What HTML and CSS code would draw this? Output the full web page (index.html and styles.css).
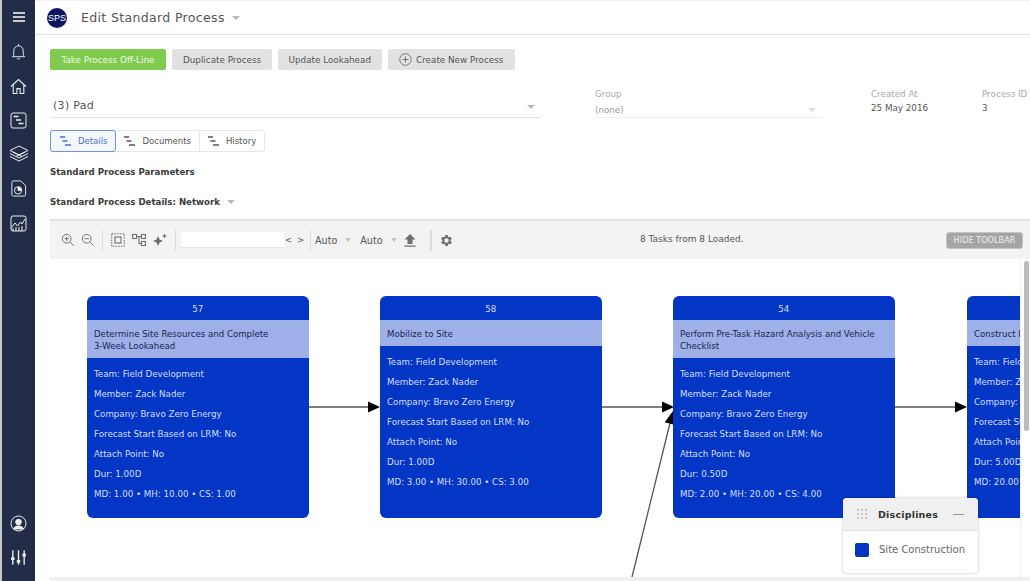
FILE: index.html
```html
<!DOCTYPE html>
<html lang="en">
<head>
<meta charset="utf-8">
<title>Edit Standard Process</title>
<link rel="stylesheet" href="styles.css">
</head>
<body>
<div class="app">
  <aside class="rail">
    <svg class="ri menu" viewBox="0 0 14 12"><path d="M1 2h12M1 6h12M1 10h12" stroke-width="1.6"/></svg>
    <div class="rail-top">
      <svg class="ri" viewBox="0 0 16 18"><path d="M3 13V8a5 5 0 0 1 10 0v5l1.500 1.500h-13zM8 1.200V3M6.500 16a1.600 1.600 0 0 0 3 0"/></svg>
      <svg class="ri" viewBox="0 0 16 16"><path d="M1 8l7-6.500L15 8M3 6.500V14.500h3.500V10h3v4.500H13V6.500"/></svg>
      <svg class="ri" viewBox="0 0 17 17"><rect x="1" y="1" width="15" height="15" rx="2"/><path d="M3.500 4.500h5M6 8h5M8.500 11.500h5" stroke-width="1.400"/></svg>
      <svg class="ri big" viewBox="0 0 20 20"><path d="M10 2l9 4.500-9 4.500-9-4.500zM1 9.500l9 4.500 9-4.500M1 12.500l9 4.500 9-4.500M4 8l9 4.500M16 8l-9 4.500"/></svg>
      <svg class="ri" viewBox="0 0 17 18"><path d="M3 1h8l5 5v9.500a1.500 1.500 0 0 1-1.500 1.500h-11A1.500 1.500 0 0 1 1.500 15.500V2.500A1.500 1.500 0 0 1 3 1z"/><circle cx="8" cy="11" r="3.800"/><path d="M8 11V7.200a3.800 3.800 0 0 1 3.800 3.800z" fill="#fff"/></svg>
      <svg class="ri" viewBox="0 0 17 17"><rect x="1" y="1" width="15" height="15" rx="2"/><path d="M1.500 12.500L5 8l2.500 3 3-4 1.500 2 3-5M3 16v-3M6 16v-4M9 16v-4M12 16v-5"/></svg>
    </div>
    <div class="rail-bottom">
      <svg class="ri" viewBox="0 0 17 17"><circle cx="8.500" cy="8.500" r="7.500"/><circle cx="8.500" cy="7" r="2.800" fill="#fff"/><path d="M3.500 14c1-2.500 2.500-3 5-3s4 .5 5 3z" fill="#fff"/></svg>
      <svg class="ri" viewBox="0 0 15 15"><path d="M2.500 1v13M7.500 1v13M12.500 1v13" stroke-width="1.200"/><path d="M1 8.500h3M6 11h3M11 5.500h3" stroke-width="2.400"/></svg>
    </div>
  </aside>
  <main class="main">
    <header class="top">
      <div class="logo">SPS</div>
      <h1 class="title">Edit Standard Process</h1>
      <span class="caret caret-title"></span>
    </header>
    <div class="content">
      <div class="actions">
        <button class="btn btn-green">Take Process Off-Line</button>
        <button class="btn">Duplicate Process</button>
        <button class="btn">Update Lookahead</button>
        <button class="btn btn-new">
          <svg class="plus" viewBox="0 0 14 14"><circle cx="7" cy="7" r="6.200"/><path d="M7 3.700v6.600M3.700 7h6.600"/></svg>
          Create New Process
        </button>
      </div>
      <div class="form">
        <div class="field-name"><span>(3) Pad</span><span class="caret"></span></div>
        <div class="field-group">
          <div class="lab">Group</div>
          <div class="sel"><span>(none)</span><span class="caret caret-pale"></span></div>
        </div>
        <div class="field-created">
          <div class="lab">Created At</div>
          <div class="val">25 May 2016</div>
        </div>
        <div class="field-id">
          <div class="lab">Process ID</div>
          <div class="val">3</div>
        </div>
      </div>
      <div class="tabs">
        <div class="tab tab-on"><svg class="tabi" viewBox="0 0 11 10"><path d="M0 1h5M2.500 5h5M5 9h6"/></svg>Details</div>
        <div class="tab"><svg class="tabi" viewBox="0 0 11 10"><path d="M0 1h5M2.500 5h5M5 9h6"/></svg>Documents</div>
        <div class="tab"><svg class="tabi" viewBox="0 0 11 10"><path d="M0 1h5M2.500 5h5M5 9h6"/></svg>History</div>
      </div>
      <div class="sec sec-params">Standard Process Parameters</div>
      <div class="sec sec-net">Standard Process Details: Network<span class="caret"></span></div>
    </div>
    <div class="toolbar">
      <svg class="ti" viewBox="0 0 16 16"><circle cx="6.500" cy="6.500" r="5"/><path d="M10.500 10.500l4 4M4 6.500h5M6.500 4v5"/></svg>
      <svg class="ti ti-gap" viewBox="0 0 16 16"><circle cx="6.500" cy="6.500" r="5"/><path d="M10.500 10.500l4 4M4 6.500h5"/></svg>
      <span class="tsep sep-a"></span>
      <svg class="ti" viewBox="0 0 14 14"><rect x=".7" y=".7" width="12.600" height="12.600" stroke-dasharray="1.500 1.200"/><rect x="4" y="4" width="6" height="6"/></svg>
      <svg class="ti ti-gap2" viewBox="0 0 14 14"><rect x=".6" y="1.500" width="4" height="4"/><rect x="9.400" y="1.500" width="4" height="4"/><rect x="9.400" y="8.500" width="4" height="4"/><path d="M4.600 3.500h4.800M7 3.500v7h2.400"/></svg>
      <svg class="ti ti-gap2 solid" viewBox="0 0 14 14"><path d="M5 3l1.500 3.500L10 8 6.500 9.500 5 13 3.500 9.500 0 8l3.500-1.500zM11.500 .5l.8 1.700 1.700.8-1.700.8-.8 1.700-.8-1.700L9 3l1.700-.8z"/></svg>
      <span class="tsep sep-b"></span>
      <input class="tinput" type="text" aria-label="Search">
      <span class="nav">&lt;</span><span class="nav nav-b">&gt;</span>
      <span class="tsep sep-c"></span>
      <span class="auto">Auto</span><span class="caret caret-auto"></span>
      <span class="auto auto-b">Auto</span><span class="caret caret-auto"></span>
      <svg class="upl" viewBox="0 0 12 13"><path d="M6 0l5.500 5.500H8.500V10h-5V5.500H.5zM.5 11.500h11v1.300H.5z"/></svg>
      <span class="tsep sep-d"></span>
      <svg class="gear" viewBox="0 0 24 24"><path d="M19.400 13a7.500 7.500 0 0 0 0-2l2.100-1.600-2-3.500-2.500 1a7.500 7.500 0 0 0-1.700-1L15 3.300h-4l-.4 2.600a7.500 7.500 0 0 0-1.700 1l-2.500-1-2 3.500L6.500 11a7.500 7.500 0 0 0 0 2l-2.100 1.600 2 3.500 2.500-1a7.500 7.500 0 0 0 1.700 1l.4 2.600h4l.4-2.600a7.500 7.500 0 0 0 1.700-1l2.500 1 2-3.500zM13 15.500a3.500 3.500 0 1 1 0-7 3.500 3.500 0 0 1 0 7z" transform="translate(-1)"/></svg>
      <span class="loaded">8 Tasks from 8 Loaded.</span>
      <button class="hide">HIDE TOOLBAR</button>
    </div>
    <section class="canvas">
      <svg class="links" width="980" height="318" viewBox="0 0 980 318">
        <path d="M258 148H320M551 148H613M845 148H907M582 318L621 160" class="lk"/>
        <path d="M330 148l-12-5.500v11zM624 148l-12-5.500v11zM917 148l-12-5.500v11zM623 152l-8.300 11.300 10.600 2.600z"/>
      </svg>
      <article class="node n1">
        <div class="nid">57</div>
        <div class="nt">Determine Site Resources and Complete<br>3-Week Lookahead</div>
        <ul class="nr">
          <li>Team: Field Development</li><li>Member: Zack Nader</li><li>Company: Bravo Zero Energy</li><li>Forecast Start Based on LRM: No</li><li>Attach Point: No</li><li>Dur: 1.00D</li><li>MD: 1.00 • MH: 10.00 • CS: 1.00</li>
        </ul>
      </article>
      <article class="node n2">
        <div class="nid">58</div>
        <div class="nt">Mobilize to Site</div>
        <ul class="nr">
          <li>Team: Field Development</li><li>Member: Zack Nader</li><li>Company: Bravo Zero Energy</li><li>Forecast Start Based on LRM: No</li><li>Attach Point: No</li><li>Dur: 1.00D</li><li>MD: 3.00 • MH: 30.00 • CS: 3.00</li>
        </ul>
      </article>
      <article class="node n3">
        <div class="nid">54</div>
        <div class="nt">Perform Pre-Task Hazard Analysis and Vehicle<br>Checklist</div>
        <ul class="nr">
          <li>Team: Field Development</li><li>Member: Zack Nader</li><li>Company: Bravo Zero Energy</li><li>Forecast Start Based on LRM: No</li><li>Attach Point: No</li><li>Dur: 0.50D</li><li>MD: 2.00 • MH: 20.00 • CS: 4.00</li>
        </ul>
      </article>
      <article class="node n4">
        <div class="nid">&nbsp;</div>
        <div class="nt">Construct Pad and Access Road</div>
        <ul class="nr">
          <li>Team: Field Development</li><li>Member: Zack Nader</li><li>Company: Bravo Zero Energy</li><li>Forecast Start Based on LRM: No</li><li>Attach Point: No</li><li>Dur: 5.00D</li><li>MD: 20.00 • MH: 200.00 • CS: 5.00</li>
        </ul>
      </article>
      <div class="scroll"><div class="thumb"></div></div>
      <div class="legend">
        <div class="lg-head">
          <svg class="grip" viewBox="0 0 12 12"><path d="M1 1h1.500v1.500H1zM5.200 1h1.500v1.500H5.200zM9.500 1H11v1.500H9.500zM1 5.200h1.500v1.500H1zM5.200 5.200h1.500v1.500H5.200zM9.500 5.200H11v1.500H9.500zM1 9.500h1.500V11H1zM5.200 9.500h1.500V11H5.200zM9.500 9.500H11V11H9.500z"/></svg>
          <b>Disciplines</b>
          <span class="dash"></span>
        </div>
        <div class="lg-body"><span class="swatch"></span>Site Construction</div>
      </div>
    </section>
  </main>
</div>
</body>
</html>
```
FILE: styles.css
```css
* { box-sizing: border-box; }
html, body { margin: 0; height: 100%; overflow: hidden; background: #fff; }
body { font-family: "DejaVu Sans", sans-serif; color: #444; font-size: 9px; }
.app { display: flex; height: 581px; width: 1030px; }

.rail { width: 35px; flex: none; background: #232d48; border-left: 2px solid #c9c9c9; display: flex; flex-direction: column; align-items: center; }
.ri { width: 17px; height: 17px; fill: none; stroke: #fff; stroke-width: 1; opacity: .92; display: block; }
.menu { width: 14px; height: 12px; margin-top: 11px; stroke-width: 1.6; opacity: 1; }
.rail-top { margin-top: 20px; display: flex; flex-direction: column; align-items: center; gap: 17.500px; }
.big { width: 20px; height: 20px; margin: -3px 0 -1px; }
.rail-bottom { margin-top: auto; margin-bottom: 15px; display: flex; flex-direction: column; align-items: center; gap: 17px; }

.main { flex: 1; min-width: 0; display: flex; flex-direction: column; }
.top { height: 35px; flex: none; display: flex; align-items: center; padding-left: 12px; border-bottom: 1px solid #e3e3e3; border-top: 1px solid #f0f0f0; }
.logo { width: 20px; height: 20px; border-radius: 50%; background: #0b1560; color: #fff; font: 9px/20px "Liberation Sans", sans-serif; text-align: center; }
.title { margin: 0 0 0 14px; font-size: 12.500px; font-weight: 400; color: #555; letter-spacing: .35px; }
.caret { display: inline-block; width: 0; height: 0; border-left: 4px solid transparent; border-right: 4px solid transparent; border-top: 4px solid #bbb; }
.caret-title { margin-left: 7px; }

.content { padding: 14px 0 0 15px; height: 184px; flex: none; }
.actions { display: flex; gap: 6.500px; }
.btn { height: 21px; padding: 0 10.500px; border: 0; border-radius: 2px; background: #e2e2e2; color: #555; font: 8.800px "DejaVu Sans", sans-serif; display: flex; align-items: center; }
.btn-green { padding: 0 11.500px; background: #7fcb4e; color: #f1f8ea; }
.btn-new { padding: 0 11.500px 0 11px; gap: 4px; }
.plus { width: 13px; height: 13px; fill: none; stroke: #555; stroke-width: .8; }

.form { display: flex; height: 60px; }
.field-name { width: 490px; height: 48px; padding: 29px 2px 0 3px; border-bottom: 1px solid #e3e3e3; display: flex; justify-content: space-between; align-items: flex-start; font-size: 11px; letter-spacing: .3px; color: #555; }
.field-name .caret { margin: 6px 3px 0 0; }
.field-group { width: 228px; margin-left: 55px; padding-top: 19px; }
.lab { color: #aaa; font-size: 8.750px; }
.sel { margin-top: 5px; padding: 0 7px 1px 0; display: flex; justify-content: space-between; align-items: center; color: #999; border-bottom: 1px solid #f0f0f0; font-size: 8.750px; height: 14px; }
.caret-pale { border-top-color: #ddd; }
.field-created { margin-left: 48px; padding-top: 19px; width: 111px; }
.field-id { padding-top: 19px; white-space: nowrap; }
.val { margin-top: 4px; color: #555; font-size: 8.750px; }

.tabs { display: inline-flex; height: 22px; border: 1px solid #e6e6e6; border-radius: 3px; }
.tab { display: flex; align-items: center; padding: 0 8px; color: #555; border-right: 1px solid #e6e6e6; font-size: 8.500px; gap: 7px; }
.tab:last-child { border-right: 0; }
.tab-on { margin: -1px 0 -1px -1px; padding: 0 8px 0 9px; background: #f4f7fd; color: #4a76c4; border: 1px solid #6f94dc; border-radius: 3px; }
.tabi { width: 11px; height: 10px; fill: none; stroke: #555; stroke-width: 1.300; }
.tab-on .tabi { stroke: #3f73d8; }
.sec { font-weight: 700; color: #3a3a3a; font-size: 8.650px; }
.sec-params { margin-top: 15px; }
.sec-net { margin-top: 20px; display: flex; align-items: center; }
.sec-net .caret { margin-left: 7px; }

.toolbar { position: relative; flex: none; height: 40px; margin-left: 15px; background: #f3f3f3; border-top: 2px solid #e2e2e2; display: flex; align-items: center; padding-left: 11px; }
.ti { width: 14px; height: 14px; fill: none; stroke: #6e6e6e; stroke-width: 1.100; flex: none; }
.ti.solid { fill: #6e6e6e; stroke: none; }
.ti-gap { margin-left: 6px; }
.ti-gap2 { margin-left: 7px; }
.tsep { width: 1px; height: 21px; background: #dcdcdc; flex: none; }
.sep-a { margin: 0 8px 0 7px; }
.sep-b { margin: 0 5px 0 8px; }
.sep-c { margin: 0 4px 0 5px; }
.sep-d { margin: 0 7px 0 14px; width: 2px; }
.tinput { width: 103px; height: 16px; border: 0; border-bottom: 1px solid #e6e6e6; background: #fff; padding: 0; flex: none; }
.nav { font-size: 8.500px; color: #555; margin-left: 1px; width: 8px; }
.nav-b { margin-left: 4px; }
.auto { color: #555; font-size: 9.600px; }
.auto-b { margin-left: 9px; }
.caret-auto { margin-left: 8px; border-left-width: 3.500px; border-right-width: 3.500px; border-top-color: #c4c4c4; }
.upl { width: 12px; height: 13px; margin-left: 7px; fill: #6e6e6e; flex: none; }
.gear { width: 15px; height: 15px; fill: #6e6e6e; flex: none; }
.loaded { position: absolute; left: 590px; top: 13px; font-size: 9px; color: #555; }
.hide { position: absolute; right: 7px; top: 11px; width: 77px; height: 17px; border: 1px solid #c4c4c4; border-radius: 3px; background: #a5a5a5; color: #f0f0f0; font: 8px "DejaVu Sans", sans-serif; padding: 0; letter-spacing: .1px; }

.canvas { position: relative; flex: 1; margin-left: 15px; overflow: hidden; border-bottom: 4px solid #efefef; }
.links { position: absolute; left: 0; top: 0; fill: #000; }
.lk { fill: none; stroke: #555; stroke-width: 1.300; }
.node { position: absolute; top: 37px; width: 221.500px; height: 221.500px; background: #0336c4; border-radius: 6px; color: #d5dff7; overflow: hidden; font-size: 8.700px; }
.n1 { left: 37px; }
.n2 { left: 330px; }
.n3 { left: 623px; }
.n4 { left: 917px; }
.nid { height: 24px; line-height: 26px; text-align: center; }
.nt { background: #9db0e8; color: #172650; padding: 8px 7px 6px; line-height: 12px; font-size: 8.600px; white-space: nowrap; }
.nr { list-style: none; margin: 0; padding: 6px 7px 0; }
.nr li { height: 20px; line-height: 20px; white-space: nowrap; }

.scroll { position: absolute; right: 0; top: 0; bottom: 0; width: 10px; background: #fff; border-left: 1px solid #efefef; }
.thumb { position: absolute; left: 3px; top: 2px; width: 5px; height: 170px; border-radius: 3px; background: #bbb; }

.legend { position: absolute; left: 793px; top: 239px; width: 135px; height: 75px; background: #fff; border-radius: 4px; box-shadow: 0 0 3px rgba(0,0,0,.25); overflow: hidden; }
.lg-head { height: 33px; background: #f0f0f0; border-bottom: 1px solid #e2e2e2; display: flex; align-items: center; padding-left: 13px; color: #333; font-size: 9.500px; }
.lg-head b { margin-left: 10px; letter-spacing: .2px; }
.grip { width: 12px; height: 12px; fill: #aaa; }
.dash { width: 11px; height: 1px; background: #999; margin-left: 15px; }
.lg-body { display: flex; align-items: center; height: 37px; padding-left: 12px; color: #666; font-size: 10px; gap: 10px; }
.swatch { width: 14px; height: 14px; border-radius: 2px; background: #0336c4; flex: none; }
```
